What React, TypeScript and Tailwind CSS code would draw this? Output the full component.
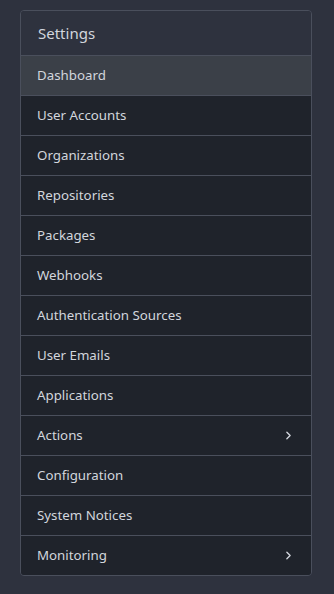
import React from 'react';
import { ChevronRight } from 'lucide-react';

interface NavItem {
  label: string;
  active?: boolean;
  submenu?: boolean;
}

const items: NavItem[] = [
  { label: 'Dashboard', active: true },
  { label: 'User Accounts' },
  { label: 'Organizations' },
  { label: 'Repositories' },
  { label: 'Packages' },
  { label: 'Webhooks' },
  { label: 'Authentication Sources' },
  { label: 'User Emails' },
  { label: 'Applications' },
  { label: 'Actions', submenu: true },
  { label: 'Configuration' },
  { label: 'System Notices' },
  { label: 'Monitoring', submenu: true },
];

const App: React.FC = () => {
  return (
    <div className="min-h-screen bg-[#2e323e] pt-[10px] px-[20px] pr-[22px] font-['Noto_Sans',sans-serif]">
      <div className="border border-[#4a4f5c] rounded-[4px] overflow-hidden">
        <div className="h-[45px] flex items-center px-[17px] text-[15px] text-[#d2d6dd] bg-[#2e323e] border-b border-[#4a4f5c]">
          Settings
        </div>
        {items.map((item, i) => {
          const last = i === items.length - 1;
          return (
            <div
              key={item.label}
              className={`flex items-center justify-between pl-[16px] pr-[16px] text-[13.3px] text-[#d2d6dd] ${
                item.active ? 'bg-[#3b4048]' : 'bg-[#1f232b]'
              } ${last ? 'h-[39px]' : 'h-[40px] border-b border-[#4a4f5c]'}`}
            >
              <span>{item.label}</span>
              {item.submenu && <ChevronRight className="w-[13px] h-[13px] text-[#d2d6dd]" strokeWidth={2.5} />}
            </div>
          );
        })}
      </div>
    </div>
  );
};

export default App;
